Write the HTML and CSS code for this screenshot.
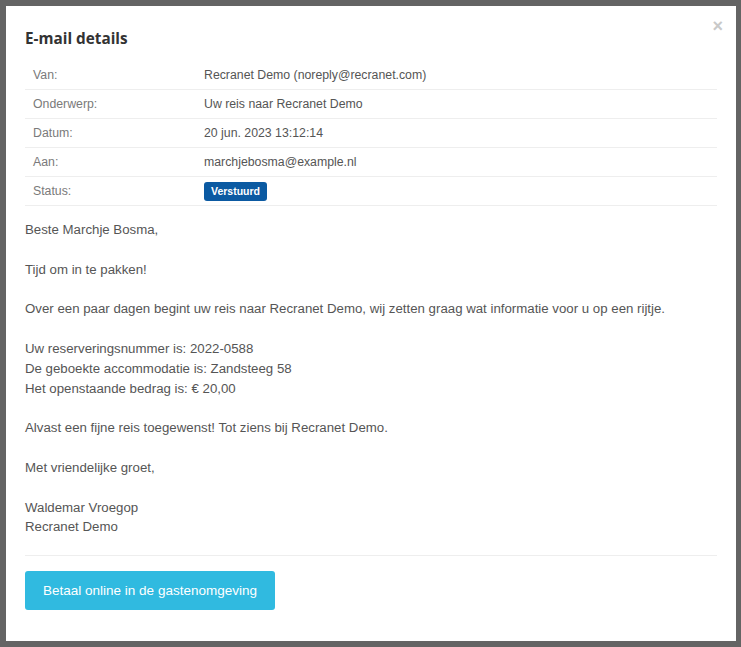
FILE: index.html
```html
<!DOCTYPE html>
<html>
<head>
<meta charset="utf-8">
<link rel="stylesheet" href="styles.css">
</head>
<body>
<div class="backdrop">
  <div class="modal">
    <div class="modal-header">
      <h4 class="modal-title">E-mail details</h4>
      <span class="close">&times;</span>
    </div>
    <table class="details">
      <tr><td class="label">Van:</td><td>Recranet Demo (noreply@recranet.com)</td></tr>
      <tr><td class="label">Onderwerp:</td><td>Uw reis naar Recranet Demo</td></tr>
      <tr><td class="label">Datum:</td><td>20 jun. 2023 13:12:14</td></tr>
      <tr><td class="label">Aan:</td><td>marchjebosma@example.nl</td></tr>
      <tr><td class="label">Status:</td><td><span class="badge">Verstuurd</span></td></tr>
    </table>
    <div class="message">
      <p>Beste Marchje Bosma,</p>
      <p>Tijd om in te pakken!</p>
      <p>Over een paar dagen begint uw reis naar Recranet Demo, wij zetten graag wat informatie voor u op een rijtje.</p>
      <p>Uw reserveringsnummer is: 2022-0588<br>De geboekte accommodatie is: Zandsteeg 58<br>Het openstaande bedrag is: € 20,00</p>
      <p>Alvast een fijne reis toegewenst! Tot ziens bij Recranet Demo.</p>
      <p>Met vriendelijke groet,</p>
      <p>Waldemar Vroegop<br>Recranet Demo</p>
    </div>
    <div class="footer">
      <a class="btn">Betaal online in de gastenomgeving</a>
    </div>
  </div>
</div>
</body>
</html>
```
FILE: styles.css
```css
html, body {
  margin: 0;
  padding: 0;
}
body {
  background: #646464;
  font-family: "Liberation Sans", Arial, sans-serif;
  width: 741px;
  height: 647px;
  overflow: hidden;
}
.backdrop {
  padding: 6px 5px 6px 6px;
}
.modal {
  background: #fff;
  width: 730px;
  height: 635px;
  box-sizing: border-box;
  padding: 0 19px;
  display: flex;
  flex-direction: column;
}
.modal-header {
  display: flex;
  justify-content: space-between;
  align-items: flex-start;
  padding-top: 22px;
  height: 55px;
  box-sizing: border-box;
}
.modal-title {
  margin: 0;
  font-family: "Open Sans", Lato, sans-serif;
  font-weight: 700;
  font-size: 15.3px;
  line-height: 20px;
  color: #333;
}
.close {
  margin-top: -12px;
  margin-right: -6px;
  font-size: 18px;
  font-weight: 700;
  color: #c9c9c9;
  line-height: 20px;
}
.details {
  width: 100%;
  border-collapse: collapse;
  font-size: 12.3px;
  color: #555;
}
.details td {
  height: 28px;
  padding: 0 0 0 8px;
  border-bottom: 1px solid #eeeeee;
  vertical-align: middle;
}
.details td.label {
  width: 163px;
  color: #7a7a7a;
}
.badge {
  display: inline-block;
  background: #0b5aa2;
  color: #fff;
  font-size: 10.5px;
  font-weight: 700;
  padding: 3px 7px 4px;
  border-radius: 3px;
  line-height: 12px;
}
.message {
  padding-top: 14px;
  font-size: 13.25px;
  line-height: 19.7px;
  color: #555;
}
.message p {
  margin: 0 0 20px;
}
.footer {
  border-top: 1px solid #eeeeee;
  margin-top: -2px;
  padding-top: 15px;
}
.btn {
  display: inline-block;
  width: 250px;
  height: 39px;
  box-sizing: border-box;
  background: #30bae0;
  color: #fff;
  border-radius: 3px;
  font-size: 13.5px;
  line-height: 39px;
  text-align: center;
}
```
